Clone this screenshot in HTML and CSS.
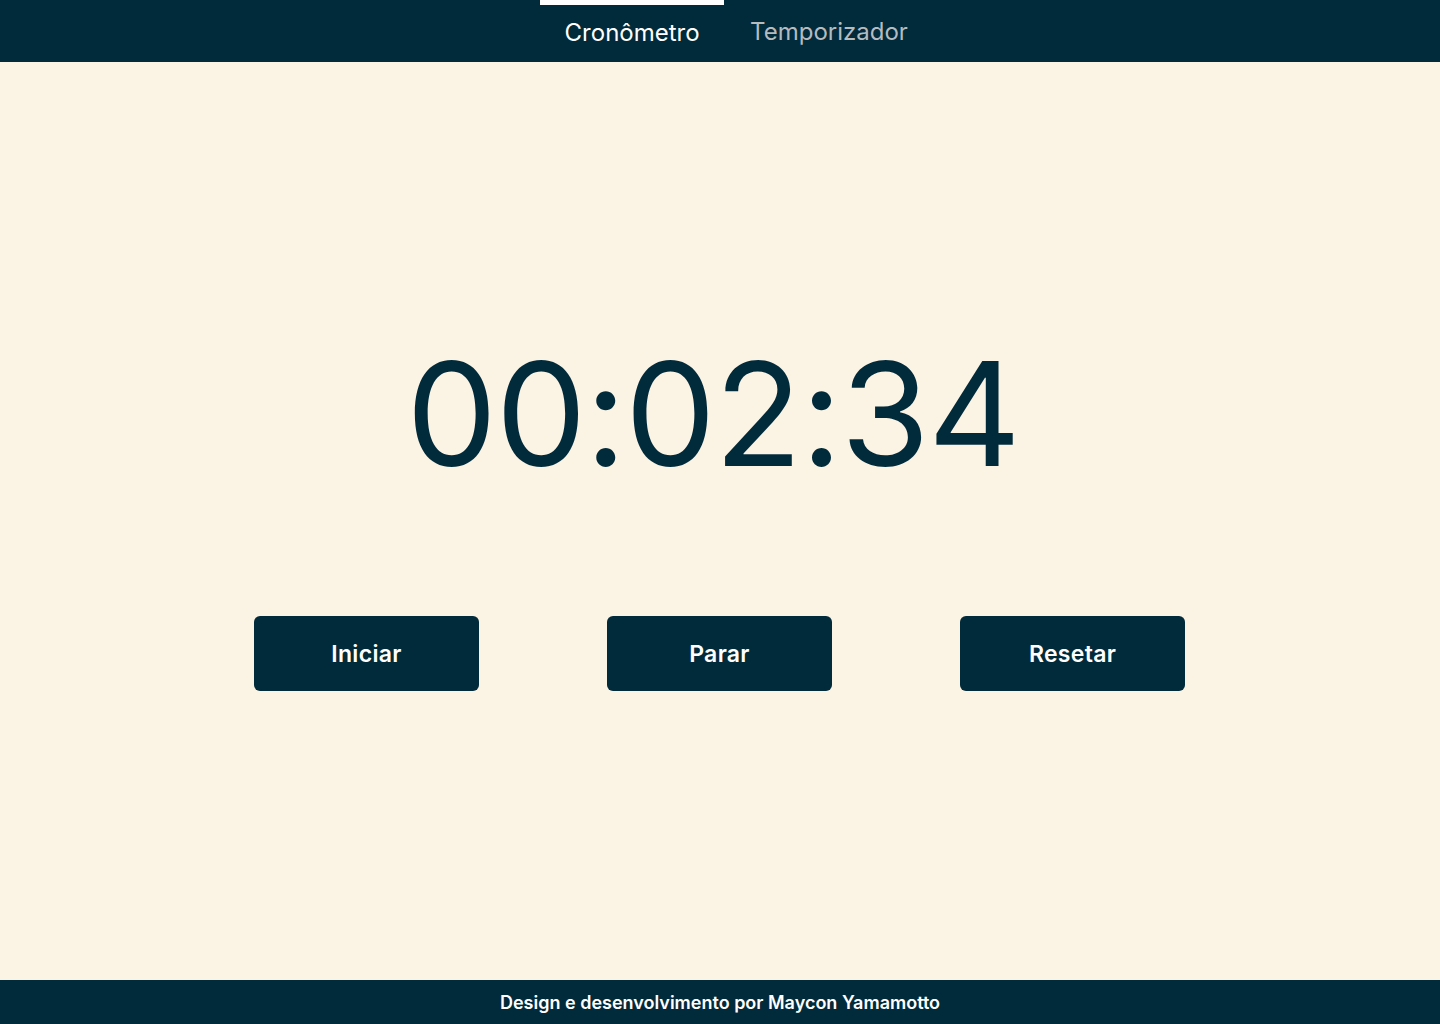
FILE: index.html
```html
<!DOCTYPE html>
<html lang="pt-BR">
<head>
<meta charset="utf-8">
<title>Cronômetro</title>
<link rel="stylesheet" href="styles.css">
</head>
<body>
<header class="topbar">
  <nav class="tabs">
    <a class="tab tab-active" href="#">Cronômetro</a>
    <a class="tab" href="#">Temporizador</a>
  </nav>
</header>
<main class="content">
  <div class="timer">00:02:34</div>
  <div class="actions">
    <button class="btn">Iniciar</button>
    <button class="btn">Parar</button>
    <button class="btn">Resetar</button>
  </div>
</main>
<footer class="footer">Design e desenvolvimento por Maycon Yamamotto</footer>
</body>
</html>
```
FILE: styles.css
```css
* { box-sizing: border-box; }
html, body { margin: 0; padding: 0; }
body {
  font-family: "Inter", "Roboto", "Liberation Sans", sans-serif;
  background: #fbf4e5;
  color: #012a3a;
  height: 1024px;
  display: flex;
  flex-direction: column;
}
.topbar {
  height: 62px;
  background: #012a3a;
  display: flex;
  justify-content: center;
  flex-shrink: 0;
}
.tabs {
  display: flex;
  padding-left: 8px;
}
.tab {
  display: flex;
  align-items: center;
  justify-content: center;
  height: 62px;
  padding: 0 0 0 26px;
  font-size: 24px;
  color: #b4bcc0;
  text-decoration: none;
}
.tab-active {
  color: #ffffff;
  border-top: 5px solid #ffffff;
  padding: 0 0 3px 0;
  width: 184px;
}
.content {
  flex: 1;
  display: flex;
  flex-direction: column;
  align-items: center;
}
.timer {
  margin-top: 280px;
  font-size: 144px;
  line-height: 1;
  font-weight: 400;
  letter-spacing: -1.5px;
  padding-right: 14px;
}
.actions {
  margin-top: 130px;
  display: flex;
  gap: 128px;
  padding-right: 1px;
}
.btn {
  width: 225px;
  height: 75px;
  border: none;
  border-radius: 6px;
  background: #012a3a;
  color: #ffffff;
  font-family: inherit;
  font-size: 23px;
  font-weight: 600;
  letter-spacing: 0.3px;
  cursor: pointer;
}
.footer {
  height: 44px;
  flex-shrink: 0;
  background: #012a3a;
  color: #ffffff;
  font-size: 18px;
  font-weight: 600;
  display: flex;
  align-items: center;
  justify-content: center;
}
```
